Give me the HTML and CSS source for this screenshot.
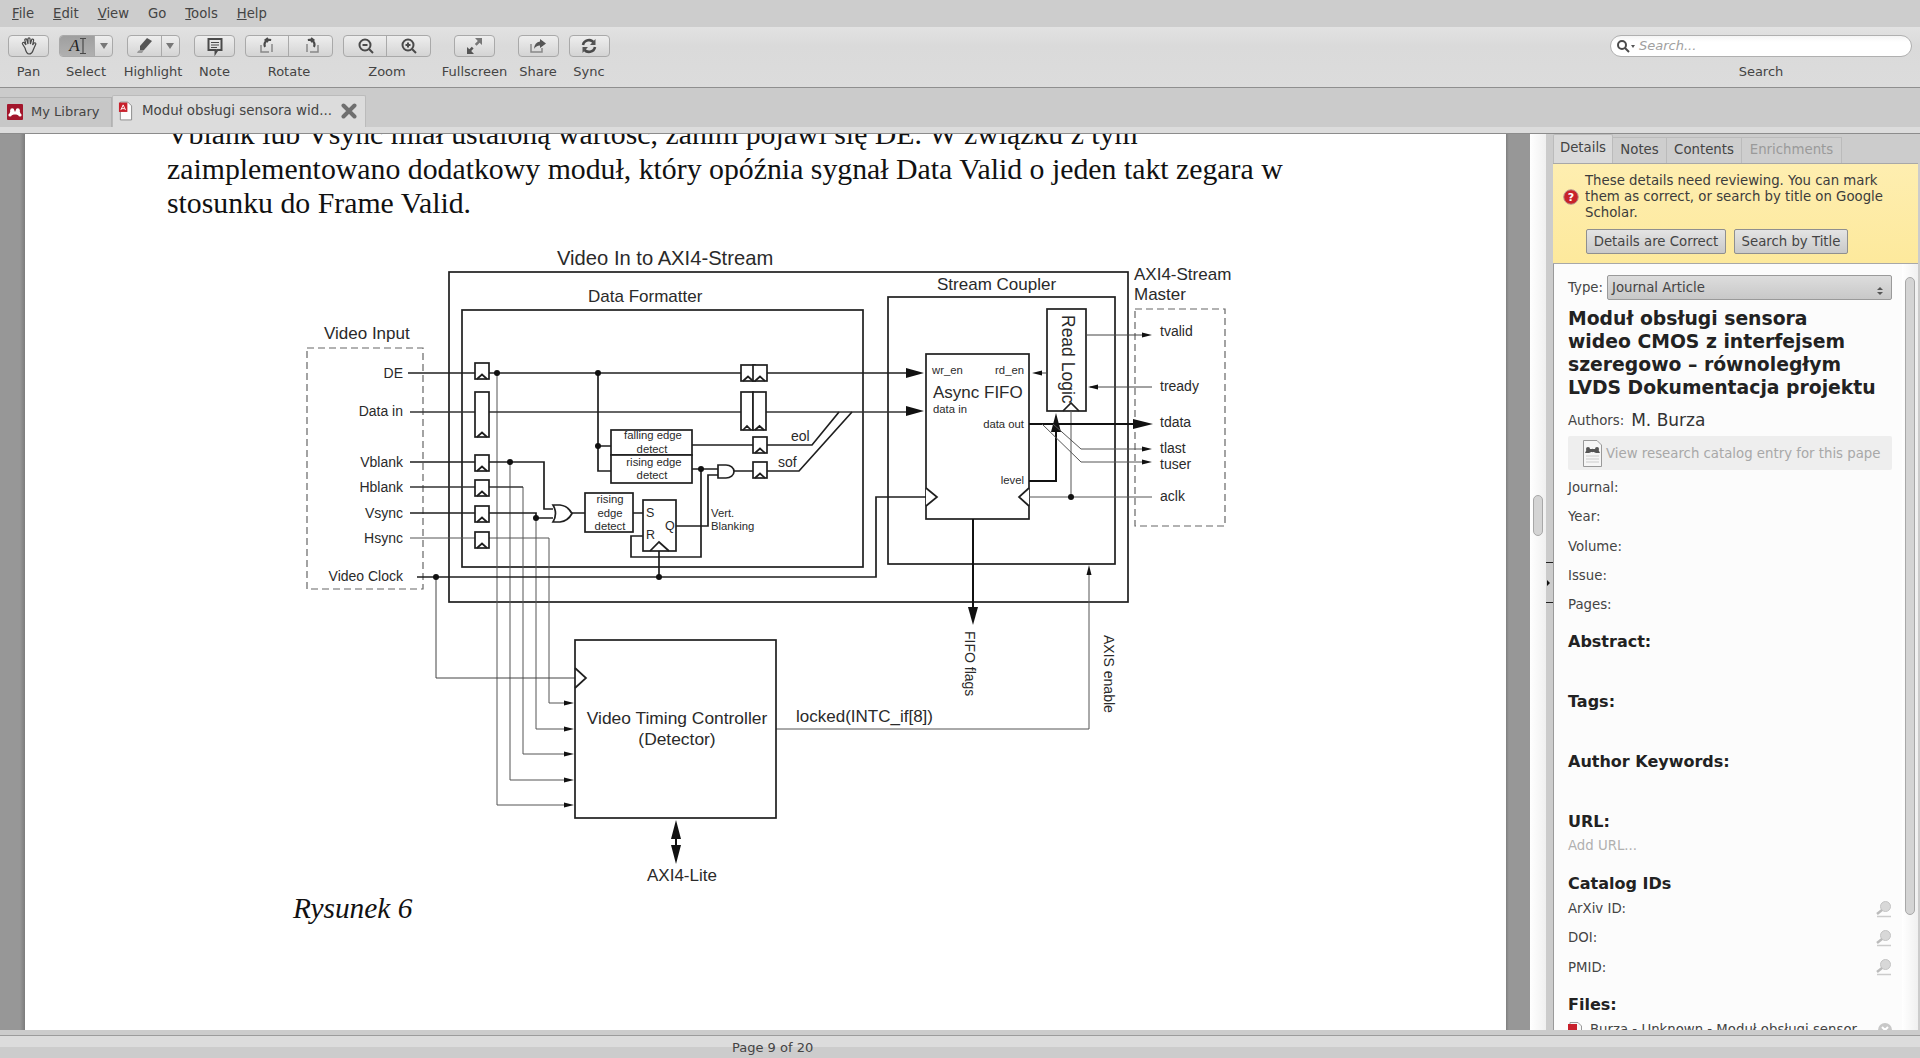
FILE: index.html
```html
<!DOCTYPE html>
<html lang="pl">

<head>
    <meta charset="UTF-8">
    <title>Mendeley Desktop</title>
    <link rel="stylesheet" href="styles.css">
</head>

<body>
    <div class="menubar">
        <span><u>F</u>ile</span>
        <span><u>E</u>dit</span>
        <span><u>V</u>iew</span>
        <span>Go</span>
        <span><u>T</u>ools</span>
        <span><u>H</u>elp</span>
    </div>

    <div class="toolbar">
        <div class="tool tool-pan">
            <div class="btn-group">
                <div class="btn"><svg width="20" height="20" viewBox="0 0 20 20"><path class="ico" d="M6 12 L3.5 8 a1 1 0 0 1 2 -1 L7 9 L5.8 4 a1 1 0 0 1 2 -.4 L9 8 L9 2.8 a1 1 0 0 1 2 0 L11.4 8 L12.6 3.8 a1 1 0 0 1 2 .5 L13.6 9 L15.2 7 a1 1 0 0 1 1.6 1 L14.2 14 Q13 18 10 18 Q7.5 18 6 12 Z"/></svg></div>
            </div>
            <span>Pan</span>
        </div>
        <div class="tool tool-select">
            <div class="btn-group">
                <div class="btn btn-pressed"><i class="sel-a">A</i><svg width="6" height="16" viewBox="0 0 6 16"><path class="ico" d="M0 .5H6M3 .5V15.5M0 15.5H6"/></svg></div>
                <div class="btn btn-drop"><b class="caret"></b></div>
            </div>
            <span>Select</span>
        </div>
        <div class="tool tool-highlight">
            <div class="btn-group">
                <div class="btn"><svg width="20" height="20" viewBox="0 0 20 20"><path fill="#555" d="M12 2 L17 5 L9 14 L5 14 L5 10 Z"/><path fill="#999" d="M3 15 L5 14 L9 14 L7 17 L2 17 Z"/></svg></div>
                <div class="btn btn-drop"><b class="caret"></b></div>
            </div>
            <span>Highlight</span>
        </div>
        <div class="tool tool-note">
            <div class="btn-group">
                <div class="btn"><svg width="20" height="20" viewBox="0 0 20 20"><path class="ico ico-bold" d="M3.5 3 H16.5 V14 H12.5 L10.5 17 V14 H3.5 Z"/><path class="ico" d="M6 6.5H14M6 9H14M6 11.5H12"/></svg></div>
            </div>
            <span>Note</span>
        </div>
        <div class="tool tool-rotate">
            <div class="btn-group">
                <div class="btn"><svg width="20" height="20" viewBox="0 0 20 20"><path class="ico-light" d="M3 9 V16 H11 M14 8 V16"/><path class="ico ico-bold" d="M7 11 A5 5 0 0 1 13 4 H8 M10 2 L7.5 4 L10 6"/></svg></div>
                <div class="btn"><svg width="20" height="20" viewBox="0 0 20 20"><path class="ico-light" d="M17 9 V16 H9 M6 8 V16"/><path class="ico ico-bold" d="M13 11 A5 5 0 0 0 7 4 H12 M10 2 L12.5 4 L10 6"/></svg></div>
            </div>
            <span>Rotate</span>
        </div>
        <div class="tool tool-zoom">
            <div class="btn-group">
                <div class="btn"><svg width="20" height="20" viewBox="0 0 20 20"><circle class="ico ico-bold" cx="9" cy="9" r="5.5"/><path class="ico ico-bold" d="M6.5 9H11.5M13 13L17 17"/></svg></div>
                <div class="btn"><svg width="20" height="20" viewBox="0 0 20 20"><circle class="ico ico-bold" cx="9" cy="9" r="5.5"/><path class="ico ico-bold" d="M6.5 9H11.5M9 6.5V11.5M13 13L17 17"/></svg></div>
            </div>
            <span>Zoom</span>
        </div>
        <div class="tool tool-fullscreen">
            <div class="btn-group">
                <div class="btn"><svg width="20" height="20" viewBox="0 0 20 20"><path fill="#777" d="M10 2 H17 V9 L14.6 6.8 L11.6 9.8 L9.8 8 L12.8 5 Z"/><path fill="#555" d="M2 18 V11 L4.4 13.2 L6.8 10.8 L8.6 12.6 L6.2 15 L9 18 Z"/></svg></div>
            </div>
            <span>Fullscreen</span>
        </div>
        <div class="tool tool-share">
            <div class="btn-group">
                <div class="btn"><svg width="20" height="20" viewBox="0 0 20 20"><path class="ico-light" d="M3 8 V16 H14 V12"/><path fill="#555" d="M12 3 L18 7.5 L12 12 V9.5 Q8 9.5 6 13 Q6.5 6 12 5.5 Z"/></svg></div>
            </div>
            <span>Share</span>
        </div>
        <div class="tool tool-sync">
            <div class="btn-group">
                <div class="btn"><svg width="20" height="20" viewBox="0 0 20 20"><path class="ico ico-sync" d="M4 9 A6 6 0 0 1 15 7"/><path class="ico ico-sync" d="M16 11 A6 6 0 0 1 5 13"/><path fill="#555" d="M16.5 3 V9 H11 Z M3.5 17 V11 H9 Z"/></svg></div>
            </div>
            <span>Sync</span>
        </div>
        <div class="search-tool">
            <div class="search-box">
                <svg width="14" height="14" viewBox="0 0 14 14"><circle class="ico ico-bold" cx="6" cy="6" r="4"/><path class="ico ico-bold" d="M9 9L13 13"/></svg>
                <b class="search-caret"></b>
                <em>Search...</em>
            </div>
            <span>Search</span>
        </div>
    </div>

    <div class="tabbar">
        <div class="tabs">
            <div class="tab tab-library">
                <svg width="16" height="16" viewBox="0 0 16 16"><rect width="16" height="16" rx="1" fill="#a3162c"/><circle cx="5.2" cy="6.2" r="2" fill="#fff"/><circle cx="10.8" cy="6.2" r="2" fill="#fff"/><circle cx="8" cy="9" r="1.6" fill="#fff"/><circle cx="3" cy="11" r="1.6" fill="#fff"/><circle cx="13" cy="11" r="1.6" fill="#fff"/><path fill="#fff" d="M3.6 6.5 L6.8 6 L8 8 L9.2 6 L12.4 6.5 L14 11 L11.8 11.5 L8 10 L4.2 11.5 L2 11 Z"/></svg>
                <span>My Library</span>
            </div>
            <div class="tab tab-active">
                <svg width="15" height="20" viewBox="0 0 16 20"><path d="M2.5 .5 H10.5 L14.5 4.5 V19.5 H2.5 Z" fill="#fcfcfc" stroke="#888"/><rect x="1" y="1" width="9" height="10" fill="#c8202c"/><path d="M3 9 L5.5 3.5 L8 9 M4 7.5 H7" stroke="#fff" fill="none"/></svg>
                <span class="tab-title">Moduł obsługi sensora wid...</span>
                <svg class="tab-close" width="16" height="16" viewBox="0 0 16 16"><path d="M2.5 2.5L13.5 13.5M13.5 2.5L2.5 13.5" stroke="#6f6f6f" stroke-width="4" stroke-linecap="round"/></svg>
            </div>
        </div>
    </div>

    <div class="main">
        <div class="pdf-margin"></div>
        <div class="pdf-page">
            <p class="pdf-text">Vblank lub Vsync miał ustaloną wartość, zanim pojawi się DE. W związku z tym<br>zaimplementowano dodatkowy moduł, który opóźnia sygnał Data Valid o jeden takt zegara w<br>stosunku do Frame Valid.</p>
            <svg class="figure" width="1481" height="800" viewBox="25 230 1481 800">
                <defs>
                    <g id="flop">
                        <rect class="ln box" width="14" height="16"/>
                        <path class="ln" d="M2 16 L7 11.5 L12 16"/>
                    </g>
                    <path id="head-r" d="M0 -2.5 L10 0 L0 2.5 Z"/>
                </defs>

                <text class="f20" x="557" y="265">Video In to AXI4-Stream</text>
                <rect class="ln" x="449" y="272" width="679" height="330"/>
                <text class="f17" x="588" y="302">Data Formatter</text>
                <rect class="ln" x="462" y="310" width="401" height="257"/>
                <text class="f17" x="937" y="290">Stream Coupler</text>
                <rect class="ln" x="888" y="297" width="227" height="267"/>

                <text class="f17" x="324" y="339">Video Input</text>
                <rect class="dash" x="307" y="348" width="116" height="241"/>
                <text class="f17" x="1134" y="280">AXI4-Stream</text>
                <text class="f17" x="1134" y="300">Master</text>
                <rect class="dash" x="1135" y="309" width="90" height="217"/>

                <!-- video input labels -->
                <text class="f14 end" x="403" y="378">DE</text>
                <text class="f14 end" x="403" y="416">Data in</text>
                <text class="f14 end" x="403" y="467">Vblank</text>
                <text class="f14 end" x="403" y="492">Hblank</text>
                <text class="f14 end" x="403" y="518">Vsync</text>
                <text class="f14 end" x="403" y="543">Hsync</text>
                <text class="f14 end" x="403" y="581">Video Clock</text>

                <!-- gray taps going down to the timing controller -->
                <path class="ln-gray" d="M497 373 V805 H565"/>
                <path class="ln-gray" d="M510 462 V780 H565"/>
                <path class="ln-gray" d="M523 487 V754 H565"/>
                <path class="ln-gray" d="M536 518 V729 H565"/>
                <path class="ln-gray" d="M549 538 V703 H565"/>
                <path class="ln-gray" d="M410 538 H549"/>
                <use href="#head-r" x="564" y="703"/>
                <use href="#head-r" x="564" y="729"/>
                <use href="#head-r" x="564" y="754"/>
                <use href="#head-r" x="564" y="780"/>
                <use href="#head-r" x="564" y="805"/>

                <!-- input wires -->
                <path class="ln" d="M408 373 H908"/>
                <path class="ln-mid" d="M410 412 H908"/>
                <path class="ln" d="M410 462 H475 M489 462 H544 V509 H553"/>
                <path class="ln-mid" d="M410 487 H523"/>
                <path class="ln" d="M410 513 H536 V518 H553"/>
                <path class="ln" d="M417 577 H876 V497 H926"/>
                <path class="ln-thin" d="M436 577 V678 H575"/>
                <path class="ln" d="M598 373 V471 H611 M598 446 H611"/>

                <!-- edge detect blocks -->
                <rect class="ln box" x="611" y="430" width="81" height="25"/>
                <rect class="ln box" x="611" y="455" width="81" height="28"/>
                <text class="f11 mid" x="653" y="439">falling edge</text>
                <text class="f11 mid" x="652" y="453">detect</text>
                <text class="f11 mid" x="654" y="466">rising edge</text>
                <text class="f11 mid" x="652" y="479">detect</text>
                <path class="ln" d="M692 445 H812 L839 412 M692 469 H718 M766 471 H799 L852 412 M734 471 H753"/>
                <path class="ln" d="M701 469 V557 H631 V536 H643 M718 475 H708 V526 H676"/>
                <text class="f14" x="791" y="441">eol</text>
                <text class="f14" x="778" y="467">sof</text>
                <path class="ln box" d="M718 465 H726 A8 6.5 0 0 1 726 478 H718 Z"/>

                <!-- or gate, rising edge, sr flop -->
                <path class="ln box" d="M553 505 H560 Q568 506 572 513.5 Q568 521 560 522 H553 Q558 513.5 553 505 Z"/>
                <path class="ln" d="M572 513 H585 M633 513 H643 M659 551 V577"/>
                <rect class="ln box" x="585" y="493" width="48" height="39"/>
                <text class="f11 mid" x="610" y="503">rising</text>
                <text class="f11 mid" x="610" y="517">edge</text>
                <text class="f11 mid" x="610" y="530">detect</text>
                <rect class="ln box" x="643" y="500" width="33" height="51"/>
                <path class="ln" d="M650 551 L659 542 L669 551"/>
                <text class="f12" x="646" y="517">S</text>
                <text class="f12" x="646" y="539">R</text>
                <text class="f12" x="665" y="530">Q</text>
                <text class="f11" x="711" y="517">Vert.</text>
                <text class="f11" x="711" y="530">Blanking</text>

                <!-- input register flops -->
                <use href="#flop" x="475" y="363"/>
                <rect class="ln box" x="475" y="392" width="14" height="45"/>
                <path class="ln" d="M477 437 L482 432.5 L487 437"/>
                <use href="#flop" x="475" y="455"/>
                <use href="#flop" x="475" y="480"/>
                <use href="#flop" x="475" y="506"/>
                <use href="#flop" x="475" y="532"/>
                <use href="#flop" x="741" y="365"/>
                <use href="#flop" x="753" y="365"/>
                <rect class="ln box" x="741" y="392" width="12" height="38"/>
                <rect class="ln box" x="753" y="392" width="13" height="38"/>
                <path class="ln" d="M743 430 L747 426 L751 430 M755 430 L759.5 426 L764 430"/>
                <use href="#flop" x="753" y="437"/>
                <use href="#flop" x="753" y="462"/>

                <circle cx="497" cy="373" r="3"/>
                <circle cx="598" cy="373" r="3"/>
                <circle cx="598" cy="446" r="3"/>
                <circle cx="510" cy="462" r="3"/>
                <circle cx="536" cy="518" r="3"/>
                <circle cx="701" cy="469" r="3"/>
                <circle cx="436" cy="577" r="3"/>
                <circle cx="659" cy="577" r="3"/>

                <!-- fifo -->
                <path class="head" d="M906 368 L924 373 L906 378 Z M906 406 L924 411 L906 416 Z"/>
                <rect class="ln box" x="926" y="354" width="103" height="165"/>
                <path class="ln box" d="M926 488 L937 497 L926 506"/>
                <path class="ln box" d="M1029 488 L1019 497 L1029 506"/>
                <text class="f11" x="932" y="374">wr_en</text>
                <text class="f11 end" x="1024" y="374">rd_en</text>
                <text class="f17" x="933" y="398">Async FIFO</text>
                <text class="f11" x="933" y="413">data in</text>
                <text class="f11 end" x="1024" y="428">data out</text>
                <text class="f11 end" x="1024" y="484">level</text>

                <!-- read logic -->
                <rect class="ln box" x="1047" y="309" width="39" height="102"/>
                <path class="ln" d="M1063 411 L1071 403 L1079 411"/>
                <text class="f17 read-logic" transform="translate(1062 315) rotate(90)">Read Logic</text>
                <path class="ln-thin" d="M1086 335 H1144 M1152 387 H1090 M1047 373 H1036"/>
                <path class="ln-gray" d="M1029 497 H1152 M1071 497 V411"/>
                <circle cx="1071" cy="497" r="3"/>
                <path class="ln-bold" d="M1029 424 H1136 M1029 481 H1056 V430"/>
                <path class="head" d="M1133 419 L1153 424 L1133 429 Z M1056 413 L1061 432 L1051 432 Z M1098 384.5 L1088 387 L1098 389.5 Z M1042 370.5 L1032 373 L1042 375.5 Z"/>
                <path class="ln-gray" d="M1053 424 L1081 449 H1144 M1042 424 L1081 462 H1144"/>
                <use href="#head-r" x="1142" y="335"/>
                <use href="#head-r" x="1142" y="449"/>
                <use href="#head-r" x="1142" y="462"/>
                <text class="f14" x="1160" y="336">tvalid</text>
                <text class="f14" x="1160" y="391">tready</text>
                <text class="f14" x="1160" y="427">tdata</text>
                <text class="f14" x="1160" y="453">tlast</text>
                <text class="f14" x="1160" y="469">tuser</text>
                <text class="f14" x="1160" y="501">aclk</text>

                <!-- outputs below the main block -->
                <path class="ln-bold" d="M973 519 V610"/>
                <path class="head" d="M968 607 H978 L973 625 Z"/>
                <text class="f14" transform="translate(965 631) rotate(90)">FIFO flags</text>
                <path class="ln-gray" d="M776 729 H1089 V572"/>
                <path class="head" d="M1089 565 L1091.5 575 H1086.5 Z"/>
                <text class="f14" transform="translate(1104 635) rotate(90)">AXIS enable</text>
                <text class="f17" x="796" y="722">locked(INTC_if[8])</text>

                <!-- timing controller -->
                <rect class="ln box" x="575" y="640" width="201" height="178"/>
                <path class="ln" d="M575 668 L586 678 L575 688"/>
                <text class="f18 mid" x="677" y="724">Video Timing Controller</text>
                <text class="f18 mid" x="677" y="745">(Detector)</text>
                <path class="ln-bold" d="M676 835 V850"/>
                <path class="head" d="M676 820 L681 839 H671 Z M671 845 H681 L676 864 Z"/>
                <text class="f17" x="647" y="881">AXI4-Lite</text>

                <text class="caption" x="293" y="918">Rysunek 6</text>
            </svg>
        </div>
        <div class="pdf-margin-right"></div>
        <div class="vscroll">
            <div class="vscroll-thumb"></div>
        </div>
        <div class="splitter">
            <i class="splitter-tick tick-a"></i>
            <b class="splitter-arrow"></b>
            <i class="splitter-tick tick-b"></i>
        </div>

        <div class="sidebar">
            <div class="side-tabs">
                <div class="side-tab side-tab-active">Details</div>
                <div class="side-tab side-tab-notes">Notes</div>
                <div class="side-tab side-tab-contents">Contents</div>
                <div class="side-tab side-tab-off">Enrichments</div>
            </div>
            <div class="review">
                <svg class="review-icon" width="16" height="16" viewBox="0 0 16 16"><circle cx="8" cy="8" r="7.3" fill="#c8222a" stroke="#b89a90"/><text x="8" y="12" class="review-mark">?</text></svg>
                <div class="review-body">
                    <p>These details need reviewing. You can mark them as correct, or search by title on Google Scholar.</p>
                    <div class="review-actions">
                        <button class="review-btn">Details are Correct</button>
                        <button class="review-btn">Search by Title</button>
                    </div>
                </div>
            </div>
            <div class="details">
                <div class="details-form">
                    <div class="type-row">
                        <label>Type:</label>
                        <div class="type-select">Journal Article<b class="updown"></b></div>
                    </div>
                    <h2 class="doc-title">Moduł obsługi sensora wideo CMOS z interfejsem szeregowo – równoległym LVDS Dokumentacja projektu</h2>
                    <div class="authors"><label>Authors:</label><span>M. Burza</span></div>
                    <div class="catalog-link">
                        <svg width="21" height="29" viewBox="0 0 21 29"><path d="M1.5 1.5 H15 L19.5 6 V27.5 H1.5 Z" fill="#f6f6f6" stroke="#999"/><circle cx="6" cy="10" r="2" fill="#555"/><circle cx="15" cy="10" r="2" fill="#555"/><circle cx="10.5" cy="11.5" r="1.8" fill="#555"/><path d="M3 14 L5 10 H16 L18 14 H14 L10.5 12.5 L7 14 Z" fill="#555"/><path d="M4 17H17M4 20H17M4 23H17" stroke="#ccc"/></svg>
                        <span>View research catalog entry for this pape</span>
                    </div>
                    <div class="field">Journal:</div>
                    <div class="field">Year:</div>
                    <div class="field">Volume:</div>
                    <div class="field">Issue:</div>
                    <div class="field">Pages:</div>
                    <h3 class="sec sec-first">Abstract:</h3>
                    <h3 class="sec">Tags:</h3>
                    <h3 class="sec">Author Keywords:</h3>
                    <h3 class="sec">URL:</h3>
                    <div class="add-url">Add URL...</div>
                    <h3 class="sec sec-ids">Catalog IDs</h3>
                    <div class="field field-id">ArXiv ID:<svg width="16" height="18" viewBox="0 0 16 18"><circle cx="9.5" cy="6.5" r="5" fill="#d8d8d8" stroke="#c4c4c4"/><path d="M6 10L1 14" stroke="#bbb" stroke-width="2.5"/><path d="M1 16.5H15" stroke="#ccc" stroke-width="1.5"/></svg></div>
                    <div class="field field-id">DOI:<svg width="16" height="18" viewBox="0 0 16 18"><circle cx="9.5" cy="6.5" r="5" fill="#d8d8d8" stroke="#c4c4c4"/><path d="M6 10L1 14" stroke="#bbb" stroke-width="2.5"/><path d="M1 16.5H15" stroke="#ccc" stroke-width="1.5"/></svg></div>
                    <div class="field field-id">PMID:<svg width="16" height="18" viewBox="0 0 16 18"><circle cx="9.5" cy="6.5" r="5" fill="#d8d8d8" stroke="#c4c4c4"/><path d="M6 10L1 14" stroke="#bbb" stroke-width="2.5"/><path d="M1 16.5H15" stroke="#ccc" stroke-width="1.5"/></svg></div>
                    <h3 class="sec sec-files">Files:</h3>
                    <div class="file-row">
                        <svg width="14" height="16" viewBox="0 0 14 16"><path d="M2 .5H10L13.5 4V15.5H2Z" fill="#f8f8f8" stroke="#999"/><rect y="2" width="9" height="12" fill="#c8202c"/></svg>
                        <span>Burza - Unknown - Moduł obsługi sensor</span>
                        <svg class="file-remove" width="14" height="14" viewBox="0 0 14 14"><circle cx="7" cy="7" r="7" fill="#c8c8c8"/><path d="M4 4L10 10M10 4L4 10" stroke="#fff" stroke-width="2"/></svg>
                    </div>
                </div>
                <div class="vscroll vscroll-side">
                    <div class="vscroll-thumb"></div>
                </div>
            </div>
        </div>
    </div>

    <div class="statusbar">
        <div class="status-text">Page 9 of 20</div>
    </div>
</body>

</html>
```

FILE: styles.css
```css
html, body {
    margin: 0;
    padding: 0;
    height: 100%;
    overflow: hidden;
}

body {
    display: flex;
    flex-direction: column;
    background-color: #cccccc;
    color: #444444;
    font-family: "DejaVu Sans", sans-serif;
    font-size: 13px;
}

/* menu */
.menubar {
    display: flex;
    flex: 0 0 27px;
    align-items: center;
    gap: 19px;
    padding-left: 12px;
    box-sizing: border-box;
    background-color: #cdcdcd;
    font-size: 13.2px;
}

/* toolbar */
.toolbar {
    display: flex;
    flex: 0 0 61px;
    box-sizing: border-box;
    padding-top: 8px;
    border-bottom: 1px solid #8f8f8f;
    background: linear-gradient(#e2e2e2, #dadada 32%, #dcdcdc 100%);
}

.tool {
    display: flex;
    flex-direction: column;
    align-items: center;
    gap: 7px;
    line-height: 16px;
}

.tool-pan { width: 57px; }
.tool-select { width: 58px; }
.tool-highlight { width: 76px; }
.tool-note { width: 47px; }
.tool-rotate { width: 102px; }
.tool-zoom { width: 94px; }
.tool-fullscreen { width: 81px; }
.tool-share { width: 46px; }
.tool-sync { width: 56px; }

.btn-group {
    display: flex;
    height: 22px;
    box-sizing: border-box;
    border: 1px solid #a9a9a9;
    border-radius: 4px;
    overflow: hidden;
    background: linear-gradient(#eeeeee, #d4d4d4);
}

.btn {
    display: flex;
    width: 39px;
    align-items: center;
    justify-content: center;
    border-left: 1px solid #a9a9a9;
    margin-left: -1px;
}

.tool-rotate .btn, .tool-zoom .btn { width: 43px; }
.tool-select .btn-pressed { width: 35px; background: linear-gradient(#9f9f9f, #b0b0b0); }
.tool-highlight .btn:first-child { width: 34px; }
.btn-drop { width: 17px; }

.sel-a {
    font-family: "Liberation Serif", serif;
    font-size: 17px;
    color: #222222;
}

.caret {
    border-left: 4px solid transparent;
    border-right: 4px solid transparent;
    border-top: 6px solid #777777;
}

.ico { fill: none; stroke: #4a4a4a; stroke-width: 1.2; }
.ico-bold { stroke-width: 2; }
.ico-sync { stroke-width: 2.6; }
.ico-light { fill: none; stroke: #888888; stroke-width: 1.5; }

.search-tool {
    display: flex;
    flex-direction: column;
    align-items: center;
    gap: 7px;
    width: 302px;
    margin-left: auto;
    margin-right: 8px;
    line-height: 16px;
}

.search-box {
    display: flex;
    align-items: center;
    width: 100%;
    height: 22px;
    box-sizing: border-box;
    padding-left: 5px;
    border: 1px solid #b0b0b0;
    border-radius: 11px;
    background: linear-gradient(#f4f4f4, #ffffff 30%);
}

.search-box em {
    color: #a0a0a0;
    margin-left: 4px;
}

.search-caret {
    margin-left: 1px;
    border-left: 2.5px solid transparent;
    border-right: 2.5px solid transparent;
    border-top: 3px solid #555555;
}

/* tabs */
.tabbar {
    display: flex;
    flex: 0 0 45px;
    flex-direction: column;
    box-sizing: border-box;
    background-color: #cbcbcb;
    border-bottom: 6px solid #dcdcdc;
}

.tabs {
    display: flex;
    margin-top: 7px;
    height: 32px;
    align-items: flex-end;
}

.tab {
    display: flex;
    align-items: center;
    box-sizing: border-box;
    padding-bottom: 2px;
}

.tab-library {
    width: 112px;
    height: 30px;
    padding-left: 7px;
    gap: 8px;
    background-color: #c7c7c7;
    border: 1px solid #b2b2b2;
    border-left: none;
    border-bottom: none;
}

.tab-active {
    width: 254px;
    height: 32px;
    padding-left: 5px;
    background-color: #dcdcdc;
    border: 1px solid #bbbbbb;
    border-bottom: none;
    border-radius: 2px 2px 0 0;
}

.tab-title { margin-left: 9px; font-size: 13.4px; }
.tab-close { margin-left: 9px; }

/* main area */
.main {
    display: flex;
    flex: 0 0 897px;
    min-height: 0;
    border-top: 1px solid #8c8c8c;
    box-sizing: border-box;
}

.pdf-margin {
    width: 25px;
    background: linear-gradient(90deg, #979797 80%, #7c7c7c);
}

.pdf-page {
    width: 1481px;
    overflow: hidden;
    background-color: #ffffff;
}

.pdf-text {
    margin: -17px 0 9.5px;
    padding-left: 142px;
    color: #111111;
    font-family: "Liberation Serif", serif;
    font-size: 29.8px;
    line-height: 34.5px;
    white-space: nowrap;
}

.figure {
    display: block;
    font-family: "Liberation Sans", sans-serif;
    fill: #2a2a2a;
}

.ln, .ln-bold, .ln-mid, .ln-thin, .ln-gray { fill: none; stroke: #1f1f1f; stroke-width: 1.7; }
.ln-bold { stroke-width: 2; stroke: #111111; }
.ln-mid { stroke-width: 1.4; stroke: #333333; }
.ln-thin { stroke-width: 1; stroke: #444444; }
.ln-gray { stroke-width: 1; stroke: #555555; }
.box { fill: #ffffff; }
.dash { fill: none; stroke: #666666; stroke-width: 1.2; stroke-dasharray: 7 4; }
.head, .figure circle, .figure use { fill: #111111; }

.f11 { font-size: 11.3px; }
.f12 { font-size: 12.5px; }
.f14 { font-size: 14px; }
.f17 { font-size: 17px; }
.f18 { font-size: 17.4px; }
.f20 { font-size: 20.2px; }
.end { text-anchor: end; }
.mid { text-anchor: middle; }
.read-logic { font-size: 17.5px; }

.caption {
    font-family: "Liberation Serif", serif;
    font-style: italic;
    font-size: 29.4px;
    fill: #111111;
}

.pdf-margin-right {
    width: 24px;
    background: linear-gradient(90deg, #7e7e7e, #979797 12%);
}

.vscroll {
    position: relative;
    width: 16px;
    background: linear-gradient(90deg, #ffffff, #f0f0f0);
}

.vscroll-thumb {
    position: absolute;
    left: 3px;
    top: 361px;
    width: 8px;
    height: 39px;
    border: 1px solid #a8a8a8;
    border-radius: 5px;
    background-color: #d4d4d4;
}

.splitter {
    position: relative;
    width: 7px;
    background-color: #cccccc;
}

.splitter-tick {
    position: absolute;
    left: 0;
    width: 7px;
    height: 1px;
    background-color: #222222;
}

.tick-a { top: 428px; }
.tick-b { top: 468px; }

.splitter-arrow {
    position: absolute;
    left: 1px;
    top: 446px;
    border-top: 3px solid transparent;
    border-bottom: 3px solid transparent;
    border-left: 3px solid #111111;
}

/* right side panel */
.sidebar {
    display: flex;
    flex-direction: column;
    width: 365px;
    min-height: 0;
    margin-right: 2px;
}

.side-tabs {
    display: flex;
    align-items: flex-end;
    flex: 0 0 29px;
    background-color: #cccccc;
    font-size: 13.3px;
}

.side-tab {
    display: flex;
    align-items: center;
    justify-content: center;
    box-sizing: border-box;
    height: 26px;
    padding-bottom: 3px;
    background-color: #cecece;
    border: 1px solid #bbbbbb;
    border-bottom: none;
    border-left: none;
}

.side-tab-active {
    width: 60px;
    height: 29px;
    background-color: #dadada;
    border-left: 1px solid #bbbbbb;
    border-radius: 2px 2px 0 0;
}

.side-tab-notes { width: 54px; }
.side-tab-contents { width: 75px; }
.side-tab-off { width: 100px; color: #9a9a9a; }

.review {
    display: flex;
    flex: 0 0 101px;
    box-sizing: border-box;
    align-items: flex-start;
    padding: 9px 0 0 10px;
    border-top: 1px solid #a8a8a8;
    border-bottom: 1px solid #a8a8a8;
    background: linear-gradient(#feeeb0, #fde99c);
}

.review-icon {
    flex: none;
    margin-top: 16px;
    margin-right: 6px;
}

.review-mark {
    fill: #ffffff;
    font-size: 11px;
    font-weight: bold;
    text-anchor: middle;
}

.review-body p {
    margin: 0;
    max-width: 320px;
    line-height: 16px;
    font-size: 13.3px;
    color: #3c3c3c;
}

.review-actions {
    display: flex;
    gap: 8px;
    margin-top: 8px;
    margin-left: 1px;
}

.review-btn {
    height: 25px;
    padding: 0;
    box-sizing: border-box;
    border: 1px solid #8f8f8f;
    border-radius: 2px;
    background: linear-gradient(#e4e4e4, #c9c9c9);
    color: #444444;
    font-family: "DejaVu Sans", sans-serif;
    font-size: 13.3px;
}

.review-btn:first-child { width: 140px; }
.review-btn:last-child { width: 114px; }

.details {
    display: flex;
    flex: 1;
    min-height: 0;
    overflow: hidden;
    border-left: 1px solid #9a9a9a;
    background-color: #fcfcfc;
}

.details-form {
    flex: 1;
    min-width: 0;
    box-sizing: border-box;
    padding: 11px 10px 0 14px;
    font-size: 13.3px;
}

.type-row {
    display: flex;
    align-items: center;
    gap: 4px;
}

.type-select {
    position: relative;
    flex: 1;
    height: 25px;
    line-height: 23px;
    box-sizing: border-box;
    padding-left: 4px;
    border: 1px solid #9a9a9a;
    border-radius: 2px;
    background: linear-gradient(#dddddd, #c8c8c8);
}

.updown {
    position: absolute;
    right: 8px;
    top: 7px;
    width: 0;
    height: 4px;
    border-left: 3px solid transparent;
    border-right: 3px solid transparent;
    border-bottom: 3px solid #555555;
}

.updown::after {
    content: "";
    position: absolute;
    left: -3px;
    top: 9px;
    border-left: 3px solid transparent;
    border-right: 3px solid transparent;
    border-top: 3px solid #555555;
}

.doc-title {
    margin: 7px 0 0;
    max-width: 308px;
    color: #222222;
    font-size: 18.8px;
    font-weight: bold;
    line-height: 23px;
}

.authors {
    display: flex;
    align-items: center;
    gap: 7px;
    height: 24px;
    margin-top: 9px;
}

.authors span {
    color: #333333;
    font-size: 17px;
}

.catalog-link {
    display: flex;
    align-items: center;
    height: 34px;
    margin-top: 4px;
    padding-left: 14px;
    gap: 3px;
    overflow: hidden;
    white-space: nowrap;
    border-radius: 2px;
    background-color: #eeeeee;
    color: #a8a8a8;
}

.field {
    display: flex;
    align-items: center;
    justify-content: space-between;
    height: 29px;
}

.catalog-link + .field { margin-top: 3px; }
.field + .field { padding-top: 0.3px; }

.sec {
    height: 20px;
    margin: 40px 0 0;
    color: #222222;
    font-size: 16px;
    font-weight: bold;
    line-height: 20px;
}

.sec-first { margin-top: 13px; }
.sec-ids { margin-top: 18px; }
.sec-files { margin-top: 13px; }

.add-url {
    height: 20px;
    margin-top: 4px;
    line-height: 20px;
    color: #b0b0b0;
}

.file-row {
    display: flex;
    align-items: center;
    height: 16px;
    margin-top: 7px;
    gap: 8px;
    white-space: nowrap;
}

.file-remove { margin-left: auto; }

.vscroll-side {
    flex: none;
}

.vscroll-side .vscroll-thumb {
    top: 13px;
    height: 636px;
}

/* bottom */
.statusbar {
    flex: 0 0 28px;
    box-sizing: border-box;
    padding-top: 5px;
    background-color: #cccccc;
}

.status-text {
    display: flex;
    height: 22px;
    padding-left: 732px;
    align-items: center;
    border-top: 1px solid #9c9c9c;
    background: linear-gradient(#dcdcdc 50%, #cccccc 50%);
}
```
